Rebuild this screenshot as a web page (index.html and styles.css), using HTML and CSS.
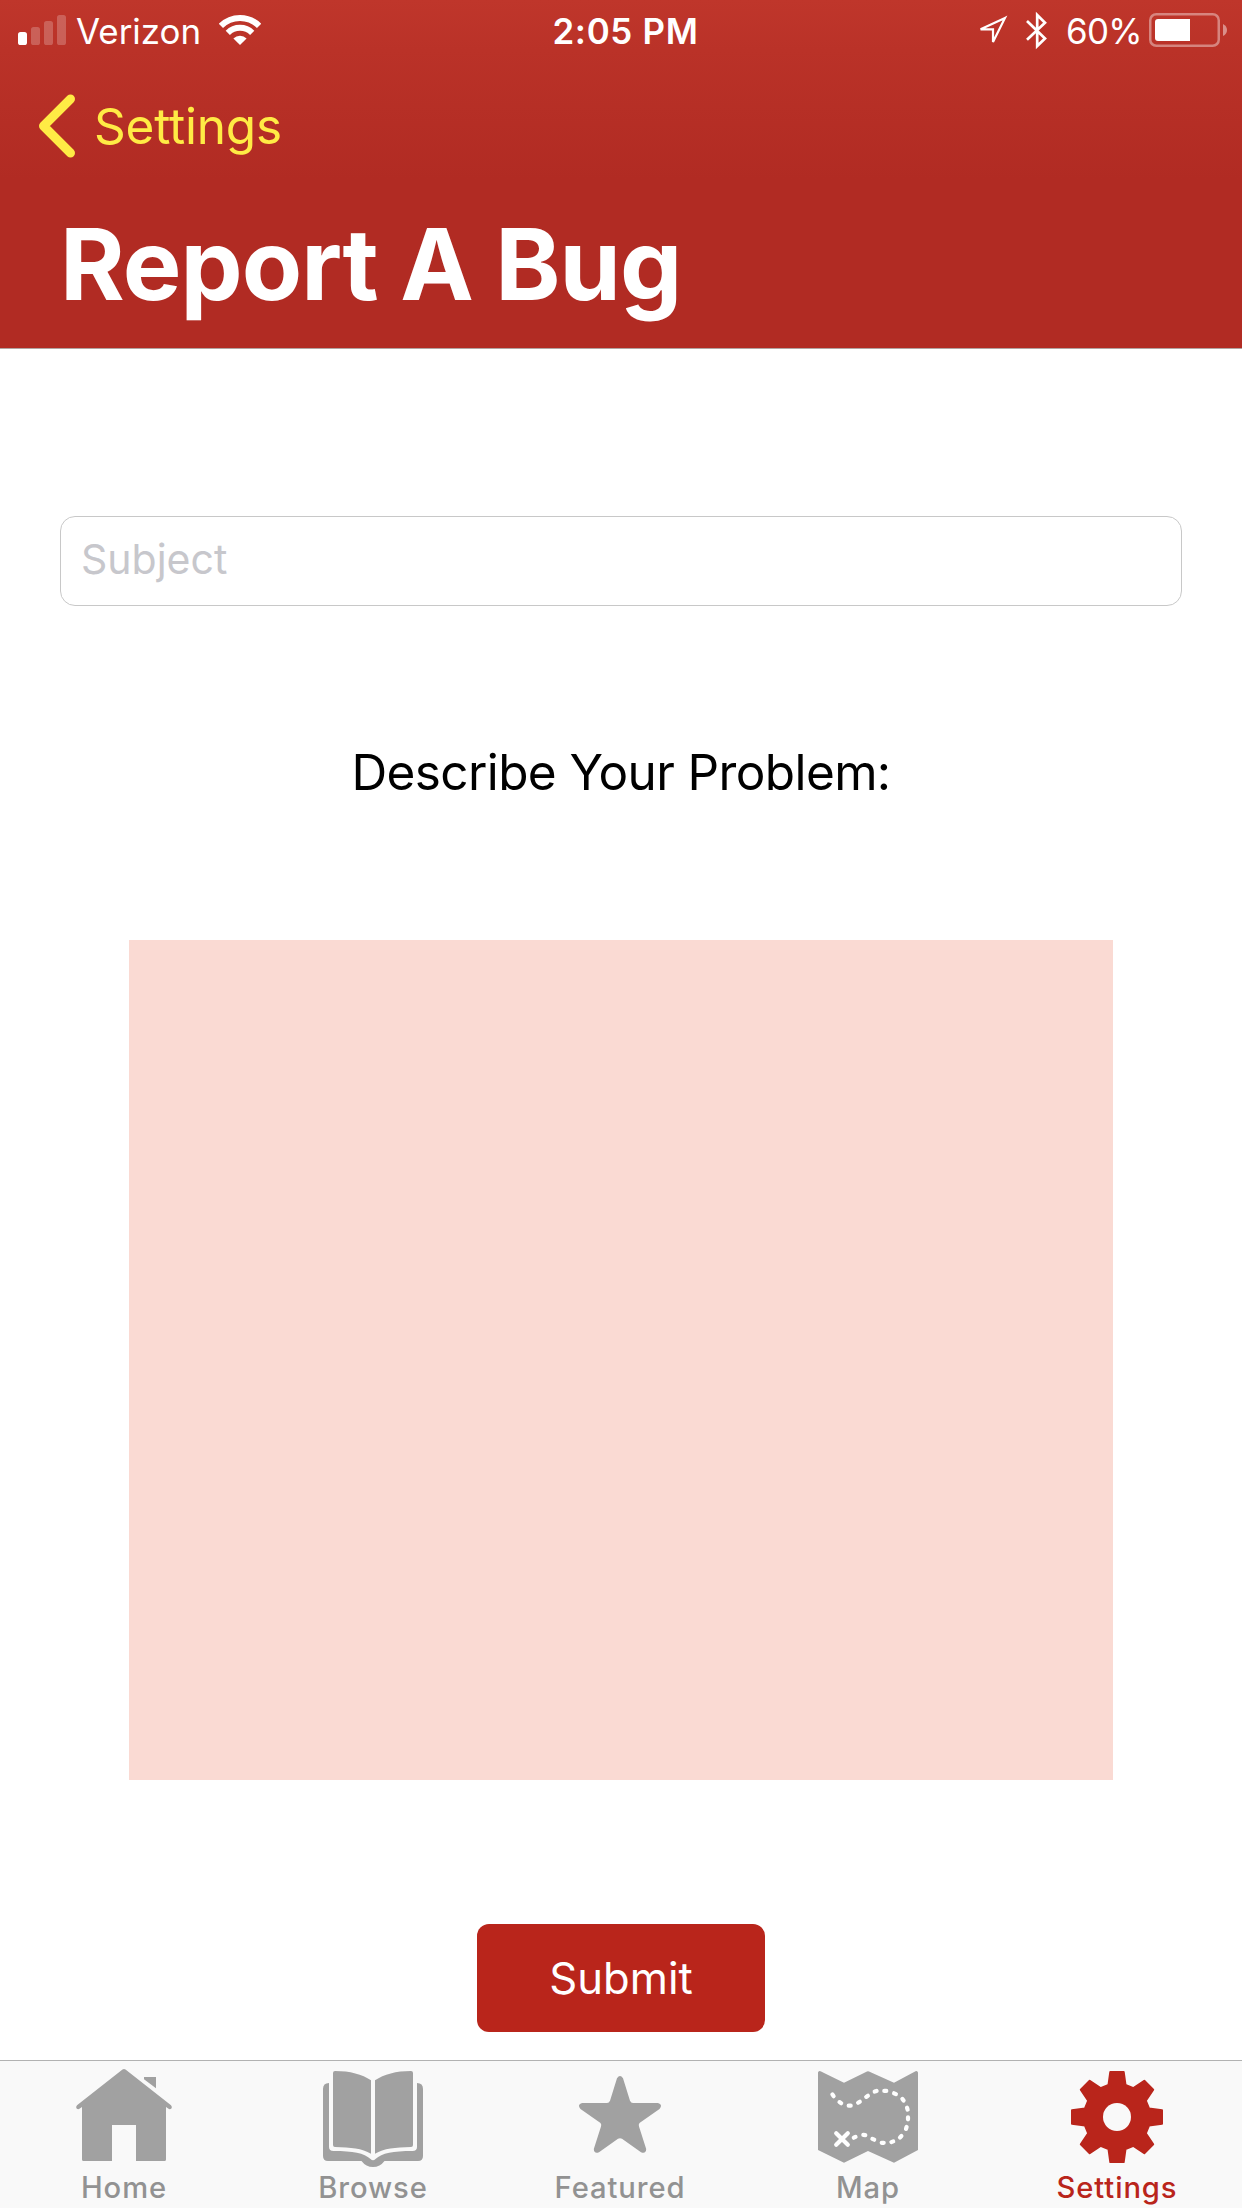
FILE: index.html
```html
<!DOCTYPE html>
<html lang="en">
<head>
<meta charset="utf-8">
<title>Report A Bug</title>
<link rel="stylesheet" href="styles.css">
</head>
<body>
<div class="screen">
  <header class="header">
    <div class="status">
      <div class="status-left">
        <svg width="48" height="60" viewBox="0 0 48 60" fill="#fff">
          <rect x="0" y="32" width="9" height="13" rx="2.6"/>
          <g opacity=".22">
            <rect x="13" y="27" width="9" height="18" rx="2.6"/>
            <rect x="26" y="21" width="9" height="24" rx="2.6"/>
            <rect x="39" y="15" width="9" height="30" rx="2.6"/>
          </g>
        </svg>
        <span class="carrier">Verizon</span>
        <svg width="42" height="60" viewBox="0 0 42 60" fill="none" stroke="#fff" stroke-width="6">
          <path d="M1.9 25.9A27 27 0 0 1 40.1 25.9"/>
          <path d="M8.8 32.8A17.3 17.3 0 0 1 33.2 32.8"/>
          <path d="M21 45L14.4 38.4A9.4 9.4 0 0 1 27.6 38.4Z" fill="#fff" stroke="none"/>
        </svg>
      </div>
      <span class="time">2:05 PM</span>
      <div class="status-right">
        <svg class="location" width="31" height="60" viewBox="0 0 31 60" fill="none" stroke="#fff" stroke-width="2.2">
          <path d="M28 17.9L3.6 29.3H16V42Z"/>
        </svg>
        <svg class="bluetooth" width="22" height="60" viewBox="0 0 22 60" fill="none" stroke="#fff" stroke-width="2.7">
          <path d="M1 21L19 38.5L11.2 46V15L19 22.7L1 39.8"/>
        </svg>
        <span class="percent">60%</span>
        <svg width="79" height="60" viewBox="0 0 79 60">
          <rect x="1.25" y="14.25" width="68.5" height="31.5" rx="6" fill="none" stroke="#fff" stroke-opacity=".4" stroke-width="2.5"/>
          <path d="M6 22q0-3 3-3H41V41H9q-3 0-3-3Z" fill="#fff"/>
          <path d="M74 24Q78 26 78 30T74 36Z" fill="#fff" fill-opacity=".45"/>
        </svg>
      </div>
    </div>
    <a class="back">
      <svg width="40" height="70" viewBox="0 0 40 70" fill="none" stroke="#ffeb45" stroke-width="9" stroke-linecap="round" stroke-linejoin="round">
        <path d="M32.500 8L5.500 35L32.500 62"/>
      </svg>
      <span>Settings</span>
    </a>
    <h1 class="title">Report A Bug</h1>
  </header>

  <main class="form">
    <input class="subject" type="text" placeholder="Subject">
    <label class="prompt" for="problem">Describe Your Problem:</label>
    <textarea class="problem" id="problem"></textarea>
    <button class="submit" type="button">Submit</button>
  </main>

  <nav class="tabs">
    <a class="tab">
      <svg width="120" height="108" viewBox="0 0 120 108">
        <path d="M58.5 8.6Q60 7.4 61.5 8.6L107 44.2Q108.6 46 107.4 47.4Q106 48.8 104.2 47.6L102 45.9V98.5Q102 100 100.5 100H72V64H48V100H19.500Q18 100 18 98.500V45.900L15.800 47.600Q14 48.800 12.600 47.400Q11.400 46 13 44.200Z"/>
        <path d="M80 16H92V27.200L80 18.200Z"/>
      </svg>
      <span>Home</span>
    </a>
    <a class="tab">
      <svg width="120" height="108" viewBox="0 0 120 108">
        <path d="M16 22V86q0 4 4.500 4C40 90 51 92 57.500 98Q60 100.500 62.500 98C69 92 80 90 99.500 90q4.500 0 4.500-4V22q6 0 6 6V95q0 5-5 5H71.500Q67 106 60 106T48.500 100H15q-5 0-5-5V28q0-6 6-6Z"/>
        <path d="M22 10C37 10 49 13.300 58 19.300V92.700C49 87.500 38 86.300 22 86q-2 0-2-2V12q0-2 2-2Z"/>
        <path d="M98 10C83 10 71 13.300 62 19.300V92.700C71 87.500 82 86.300 98 86q2 0 2-2V12q0-2-2-2Z"/>
      </svg>
      <span>Browse</span>
    </a>
    <a class="tab">
      <svg width="120" height="108" viewBox="0 0 120 108">
        <path d="M57 17.200Q60 12.800 63 17.200L70 39.800Q71 42 73 42H98Q103.200 43.500 99.500 48L79.500 62Q78.300 63.500 79 65.500L86.200 88Q86 93.200 81 91.300L62 77.800Q60 76.600 58 77.800L39 91.300Q34 93.200 33.800 88L41 65.500Q41.700 63.500 40.500 62L20.500 48Q16.800 43.500 22 42H47Q49 42 50 39.800Z"/>
      </svg>
      <span>Featured</span>
    </a>
    <a class="tab">
      <svg width="120" height="108" viewBox="0 0 120 108">
        <path d="M10 11.500Q10.500 9.400 12.500 10.200L36 21.700L59 10.400Q60 9.900 61 10.400L86 21.700L107.500 10.200Q109.500 9.400 110 11.500V89L86 101.700L60 90L36 101.700L10 89Z"/>
        <g fill="none" stroke="#fff" stroke-width="4.200" stroke-linecap="round">
          <path d="M24.400 33.400l1.200 1.800M31.500 41.100l1.700 1.100M40.700 44.700h2M50.100 41.800l1.700-1M58.200 35.900l1.700-1.100M66.700 30.600l1.900-.6M76.300 29.900h2M86.100 32.300l1.800.8M94.400 37.900l1.200 1.600M99 46.700l.6 1.900M100 56.300v2M98.600 66l-.6 1.900M93.400 75l-1.400 1.400M85.200 80.400l-1.800.7M75.700 81.800h-2M66.200 78.700l-1.800-.8M57.300 74.100l-2-.2M47.500 75.900l-1.700.8"/>
          <path d="M28.200 72.200L39.800 83.800M39.800 72.200L28.200 83.800"/>
        </g>
      </svg>
      <span>Map</span>
    </a>
    <a class="tab tab-active">
      <svg width="120" height="108" viewBox="0 0 120 108">
        <g transform="translate(60 56)" stroke="currentColor" stroke-width="2" stroke-linejoin="round">
          <path d="M-8.500-32L-6.700-45H6.700L8.500-32L16.400-28.800L27.300-36.200L36.200-27.300L28.800-16.400L32-8.500L45-6.700V6.700L32 8.500L28.800 16.400L36.200 27.300L27.300 36.200L16.400 28.800L8.500 32L6.700 45H-6.700L-8.500 32L-16.400 28.800L-27.300 36.200L-36.200 27.300L-28.800 16.400L-32 8.500L-45 6.700V-6.700L-32-8.500L-28.800-16.400L-36.200-27.300L-27.300-36.200L-16.400-28.800Z"/>
          <circle r="14" fill="#f9f9f9" stroke="none"/>
        </g>
      </svg>
      <span>Settings</span>
    </a>
  </nav>
</div>
</body>
</html>
```
FILE: styles.css
```css
* {
  box-sizing: border-box;
}

body {
  margin: 0;
  background: #fff;
  font-family: Inter, "Liberation Sans", sans-serif;
}

svg {
  display: block;
  flex: none;
}

.screen {
  display: flex;
  flex-direction: column;
  width: 1242px;
  height: 2208px;
}

.header {
  height: 349px;
  border-bottom: 1px solid #b2a3a1;
  background: linear-gradient(#bf362b 0, #ba3228 50px, #b12b23 180px);
  background-clip: padding-box;
  color: #fff;
}

/* Status bar */
.status {
  display: grid;
  grid-template-columns: 1fr auto 1fr;
  height: 60px;
  padding: 0 14px 0 18px;
  font-size: 34.9px;
  line-height: 62px;
}

.status-left,
.status-right {
  display: flex;
  height: 60px;
}

.status-right {
  justify-content: flex-end;
}

.carrier {
  width: 125px;
  margin: 0 18px 0 10px;
}

.time {
  padding-left: 5px;
  font-weight: 600;
  letter-spacing: .7px;
}

.location {
  margin-right: 18px;
}

.bluetooth {
  margin-right: 18px;
}

.percent {
  width: 83px;
  letter-spacing: -.7px;
}

/* Navigation */
.back {
  display: flex;
  align-items: center;
  gap: 16px;
  height: 132px;
  padding-left: 38px;
  color: #ffeb45;
  font-size: 49.5px;
  letter-spacing: -.2px;
}

.title {
  margin: 0;
  padding-left: 60px;
  font-size: 98.6px;
  font-weight: 700;
  letter-spacing: -.9px;
  line-height: 145px;
}

/* Form */
.form {
  display: flex;
  flex: 1;
  flex-direction: column;
  align-items: center;
  padding-top: 167px;
}

.subject {
  width: 1122px;
  height: 90px;
  padding: 0 20px 4px;
  border: 1px solid #c8c8c8;
  border-radius: 15px;
  background: #fff;
  font: 41px Inter, "Liberation Sans", sans-serif;
}

.subject::placeholder {
  color: #c7c7cc;
  opacity: 1;
}

.prompt {
  margin-top: 136px;
  color: #000;
  font-size: 49.5px;
  letter-spacing: -.62px;
  line-height: 60px;
}

.problem {
  width: 984px;
  height: 840px;
  margin-top: 138px;
  border: 0;
  background: #fadad3;
  resize: none;
}

.submit {
  width: 288px;
  height: 108px;
  margin-top: 144px;
  padding: 0;
  border: 0;
  border-radius: 12px;
  background: #b9251b;
  color: #fff;
  font: 43.6px Inter, "Liberation Sans", sans-serif;
}

/* Tab bar */
.tabs {
  display: grid;
  grid-template-columns: 248px 250px 244px 252px 246px;
  height: 148px;
  border-top: 1px solid #b2b2b2;
  background: #f9f9f9;
}

.tab {
  display: flex;
  flex-direction: column;
  align-items: center;
  color: #929292;
  font-size: 29.2px;
  font-weight: 500;
  letter-spacing: .9px;
  line-height: 37px;
}

.tab svg {
  fill: #a1a1a1;
}

.tab-active {
  color: #b9251b;
}

.tab-active svg {
  fill: currentColor;
}
```
